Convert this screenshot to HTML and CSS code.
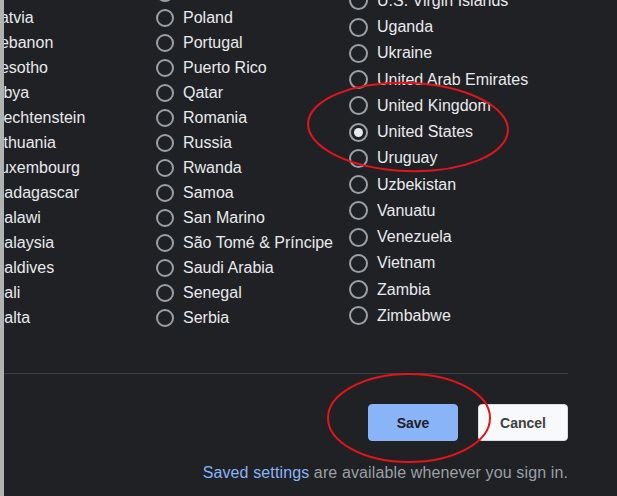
FILE: index.html
```html
<!DOCTYPE html>
<html>
<head>
<meta charset="utf-8">
<link rel="stylesheet" href="styles.css">
</head>
<body>
<div class="page">
  <div class="edge"></div>
  <div class="main">
    <div class="lists">
      <div class="col col-a">
        <div class="row"><span class="radio"></span><span class="label">Laos</span></div>
        <div class="row"><span class="radio"></span><span class="label">Latvia</span></div>
        <div class="row"><span class="radio"></span><span class="label">Lebanon</span></div>
        <div class="row"><span class="radio"></span><span class="label">Lesotho</span></div>
        <div class="row"><span class="radio"></span><span class="label">Libya</span></div>
        <div class="row"><span class="radio"></span><span class="label">Liechtenstein</span></div>
        <div class="row"><span class="radio"></span><span class="label">Lithuania</span></div>
        <div class="row"><span class="radio"></span><span class="label">Luxembourg</span></div>
        <div class="row"><span class="radio"></span><span class="label">Madagascar</span></div>
        <div class="row"><span class="radio"></span><span class="label">Malawi</span></div>
        <div class="row"><span class="radio"></span><span class="label">Malaysia</span></div>
        <div class="row"><span class="radio"></span><span class="label">Maldives</span></div>
        <div class="row"><span class="radio"></span><span class="label">Mali</span></div>
        <div class="row"><span class="radio"></span><span class="label">Malta</span></div>
      </div>
      <div class="col col-b">
        <div class="row"><span class="radio"></span><span class="label">Pitcairn Islands</span></div>
        <div class="row"><span class="radio"></span><span class="label">Poland</span></div>
        <div class="row"><span class="radio"></span><span class="label">Portugal</span></div>
        <div class="row"><span class="radio"></span><span class="label">Puerto Rico</span></div>
        <div class="row"><span class="radio"></span><span class="label">Qatar</span></div>
        <div class="row"><span class="radio"></span><span class="label">Romania</span></div>
        <div class="row"><span class="radio"></span><span class="label">Russia</span></div>
        <div class="row"><span class="radio"></span><span class="label">Rwanda</span></div>
        <div class="row"><span class="radio"></span><span class="label">Samoa</span></div>
        <div class="row"><span class="radio"></span><span class="label">San Marino</span></div>
        <div class="row"><span class="radio"></span><span class="label">São Tomé &amp; Príncipe</span></div>
        <div class="row"><span class="radio"></span><span class="label">Saudi Arabia</span></div>
        <div class="row"><span class="radio"></span><span class="label">Senegal</span></div>
        <div class="row"><span class="radio"></span><span class="label">Serbia</span></div>
      </div>
      <div class="col col-c">
        <div class="row"><span class="radio"></span><span class="label">U.S. Virgin Islands</span></div>
        <div class="row"><span class="radio"></span><span class="label">Uganda</span></div>
        <div class="row"><span class="radio"></span><span class="label">Ukraine</span></div>
        <div class="row"><span class="radio"></span><span class="label">United Arab Emirates</span></div>
        <div class="row"><span class="radio"></span><span class="label">United Kingdom</span></div>
        <div class="row"><span class="radio checked"></span><span class="label">United States</span></div>
        <div class="row"><span class="radio"></span><span class="label">Uruguay</span></div>
        <div class="row"><span class="radio"></span><span class="label">Uzbekistan</span></div>
        <div class="row"><span class="radio"></span><span class="label">Vanuatu</span></div>
        <div class="row"><span class="radio"></span><span class="label">Venezuela</span></div>
        <div class="row"><span class="radio"></span><span class="label">Vietnam</span></div>
        <div class="row"><span class="radio"></span><span class="label">Zambia</span></div>
        <div class="row"><span class="radio"></span><span class="label">Zimbabwe</span></div>
      </div>
    </div>
    <div class="footer">
      <div class="buttons">
        <button class="btn btn-save">Save</button>
        <button class="btn btn-cancel">Cancel</button>
      </div>
      <p class="note"><span class="link">Saved settings</span> are available whenever you sign in.</p>
    </div>
  </div>
</div>
<svg class="marks" width="617" height="496" viewBox="0 0 617 496">
  <ellipse cx="408" cy="127" rx="100" ry="44" transform="rotate(2 408 127)"/>
  <ellipse cx="409" cy="418" rx="81" ry="44"/>
</svg>
</body>
</html>
```
FILE: styles.css
```css
* { box-sizing: border-box; }
html, body {
  margin: 0;
  padding: 0;
  background: #202124;
  width: 617px;
  height: 496px;
  overflow: hidden;
}
body {
  font-family: "Liberation Sans", Arial, sans-serif;
  color: #e8eaed;
  position: relative;
}
.page {
  display: flex;
  height: 496px;
}
.edge {
  width: 4px;
  flex: none;
  background: #b1b3b1;
  position: relative;
  z-index: 2;
}
.main {
  flex: 1;
  display: flex;
  flex-direction: column;
  padding-right: 49px;
  min-width: 0;
}
.lists {
  height: 374px;
  flex: none;
  overflow: hidden;
  display: grid;
  grid-template-columns: 192px 193px 240px;
  margin-left: -40px;
  width: calc(100% + 40px);
  border-bottom: 1px solid #3c4043;
}
.col {
  display: flex;
  flex-direction: column;
}
.col-a, .col-b { margin-top: -19.5px; }
.col-a .row, .col-b .row { height: 25px; }
.col-c { margin-top: -12.2px; }
.col-c .row { height: 26.25px; }
.row {
  display: flex;
  align-items: center;
  gap: 9px;
  font-size: 16px;
  white-space: nowrap;
  flex: none;
}
.radio {
  width: 18px;
  height: 18px;
  border: 2px solid #9aa0a6;
  border-radius: 50%;
  flex: none;
  display: flex;
  align-items: center;
  justify-content: center;
}
.col-c .radio {
  width: 19px;
  height: 19px;
}
.radio.checked::after {
  content: "";
  width: 9px;
  height: 9px;
  border-radius: 50%;
  background: #e8eaed;
}
.label { line-height: 18px; }
.footer {
  display: flex;
  flex-direction: column;
  align-items: flex-end;
}
.buttons {
  display: flex;
  gap: 20px;
  margin-top: 30px;
}
.btn {
  width: 90px;
  height: 37px;
  border-radius: 4px;
  font-family: "Liberation Sans", Arial, sans-serif;
  font-weight: bold;
  font-size: 14px;
  padding: 0;
  cursor: pointer;
}
.btn-save {
  background: #8ab4f8;
  border: 1px solid #8ab4f8;
  color: #202124;
}
.btn-cancel {
  background: #f8f9fa;
  border: 1px solid #dadce0;
  color: #3c4043;
}
.note {
  margin: 23px 0 0;
  font-size: 16px;
  line-height: 18px;
  color: #9aa0a6;
  white-space: nowrap;
  letter-spacing: 0.12px;
}
.link { color: #8ab4f8; }
.marks {
  position: absolute;
  left: 0;
  top: 0;
  pointer-events: none;
  z-index: 3;
}
.marks ellipse {
  fill: none;
  stroke: #e3141b;
  stroke-width: 2;
}
```
